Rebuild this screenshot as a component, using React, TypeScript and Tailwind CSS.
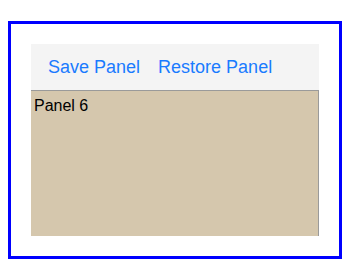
export default function App() {
  return (
    <div className="w-[360px] h-[280px] bg-white pt-[21px] px-2 font-['Liberation_Sans',Arial,sans-serif]">
      <div className="w-[334px] h-[238px] border-[3px] border-[#0000ff] p-5">
        <div className="flex items-center h-[46px] bg-[#f4f4f4] pl-[9px] gap-[2px]">
          <button type="button" className="px-2 text-[18px] text-[#1a7bff] cursor-pointer">
            Save Panel
          </button>
          <button type="button" className="px-2 text-[18px] text-[#1a7bff] cursor-pointer">
            Restore Panel
          </button>
        </div>
        <div className="h-[146px] bg-[#d5c7ad] border-t border-r border-[#9a9a9a] p-[3px] text-[16px] text-black">
          Panel 6
        </div>
      </div>
    </div>
  )
}
